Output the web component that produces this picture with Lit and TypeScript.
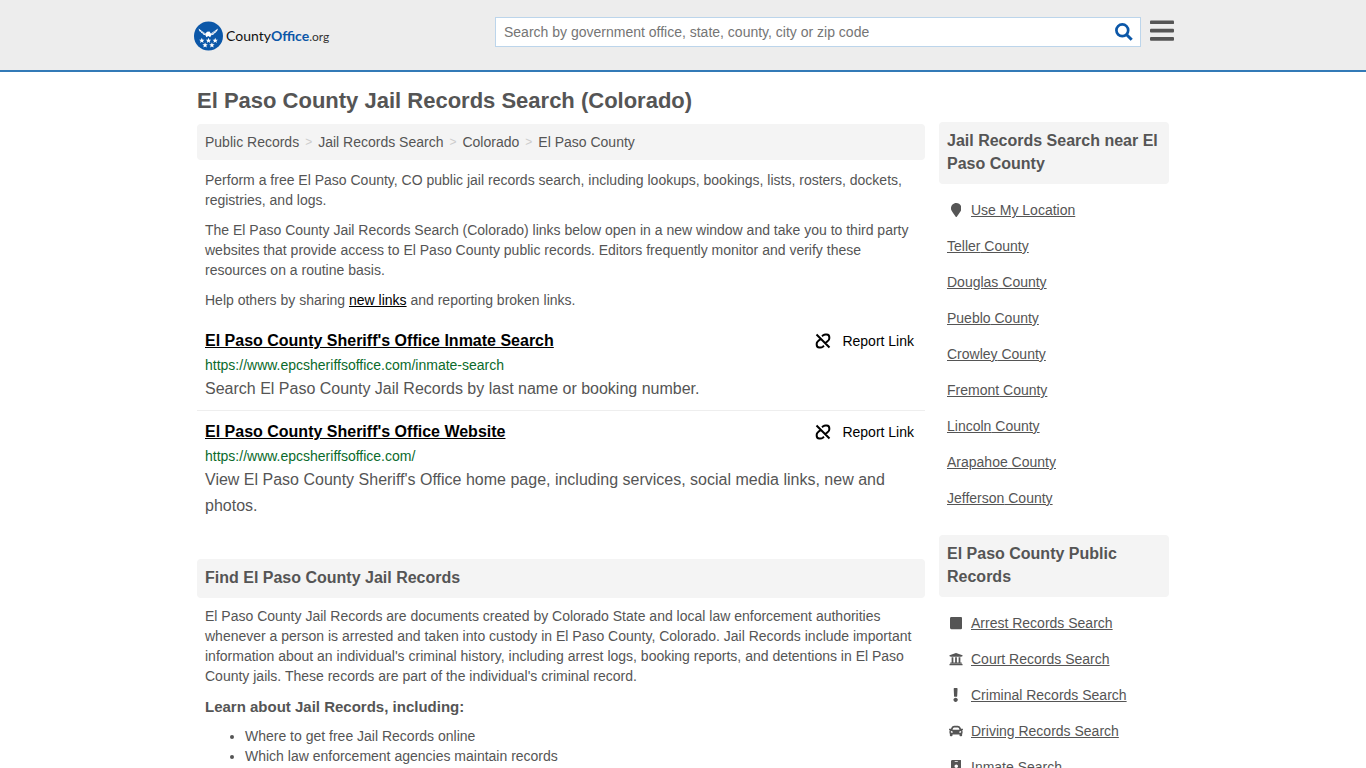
import { LitElement, html, css, svg } from "lit";
import { customElement } from "lit/decorators.js";

interface Icon {
  width: number;
  path: string;
}

const icons: Record<string, Icon> = {
  marker: {
    width: 384,
    path: "M172.268 501.67C26.97 291.031 0 269.413 0 192 0 85.961 85.961 0 192 0s192 85.961 192 192c0 77.413-26.97 99.031-172.268 309.67-9.535 13.774-29.93 13.773-39.464 0z",
  },
  square: {
    width: 448,
    path: "M400 32H48C21.5 32 0 53.5 0 80v352c0 26.500 21.500 48 48 48h352c26.500 0 48-21.500 48-48V80c0-26.500-21.500-48-48-48z",
  },
  court: {
    width: 512,
    path: "M496 128v16a8 8 0 0 1-8 8h-24v12c0 6.627-5.373 12-12 12H60c-6.627 0-12-5.373-12-12v-12H24a8 8 0 0 1-8-8v-16a8 8 0 0 1 4.941-7.392l232-88a7.996 7.996 0 0 1 6.118 0l232 88A8 8 0 0 1 496 128zm-24 304H40c-13.255 0-24 10.745-24 24v16a8 8 0 0 0 8 8h464a8 8 0 0 0 8-8v-16c0-13.255-10.745-24-24-24zM96 192v192H60c-6.627 0-12 5.373-12 12v20h416v-20c0-6.627-5.373-12-12-12h-36V192h-64v192h-64V192h-64v192h-64V192H96z",
  },
  exclamation: {
    width: 192,
    path: "M176 432c0 44.112-35.888 80-80 80s-80-35.888-80-80 35.888-80 80-80 80 35.888 80 80zM25.26 25.199l13.6 272C39.499 309.972 50.041 320 62.83 320h66.34c12.789 0 23.331-10.028 23.97-22.801l13.6-272C167.425 11.49 156.496 0 142.77 0H49.23C35.504 0 24.575 11.49 25.26 25.199z",
  },
  car: {
    width: 512,
    path: "M499.99 176h-59.87l-16.64-41.6C406.38 91.63 365.57 64 319.5 64h-127c-46.06 0-86.88 27.63-103.99 70.4L71.87 176H12.01C4.2 176-1.53 183.34.37 190.91l6 24C7.7 220.25 12.5 224 18.01 224h20.07C24.65 235.73 16 252.78 16 272v48c0 16.12 6.16 30.67 16 41.93V416c0 17.67 14.33 32 32 32h32c17.67 0 32-14.33 32-32v-32h256v32c0 17.67 14.33 32 32 32h32c17.67 0 32-14.33 32-32v-54.07c9.84-11.25 16-25.8 16-41.93v-48c0-19.22-8.65-36.27-22.07-48H494c5.51 0 10.31-3.75 11.64-9.09l6-24c1.89-7.57-3.84-14.91-11.65-14.91zm-352.06-17.83c7.29-18.22 24.94-30.17 44.57-30.17h127c19.63 0 37.28 11.95 44.57 30.17L384 208H128l19.93-49.83zM96 319.8c-19.2 0-32-12.76-32-31.9S76.8 256 96 256s48 28.71 48 47.85-28.8 15.95-48 15.95zm320 0c-19.2 0-48 3.19-48-15.95S396.800 256 416 256s32 12.76 32 31.9-12.8 31.9-32 31.9z",
  },
  badge: {
    width: 384,
    path: "M336 0H48C21.500 0 0 21.500 0 48v416c0 26.500 21.500 48 48 48h288c26.500 0 48-21.500 48-48V48c0-26.500-21.500-48-48-48zM144 32h96c8.800 0 16 7.200 16 16s-7.200 16-16 16h-96c-8.800 0-16-7.200-16-16s7.200-16 16-16zm48 128c35.300 0 64 28.700 64 64s-28.700 64-64 64-64-28.700-64-64 28.700-64 64-64z",
  },
};

const glyph = (name: string) => {
  const icon = icons[name];
  return html`<span class="glyph"><svg height="14" viewBox="0 0 ${icon.width} 512" fill="currentColor" aria-hidden="true">${svg`<path d=${icon.path}></path>`}</svg></span>`;
};

const nearby = ["Teller", "Douglas", "Pueblo", "Crowley", "Fremont", "Lincoln", "Arapahoe", "Jefferson"];

const publicRecords = [
  { icon: "square", label: "Arrest Records Search" },
  { icon: "court", label: "Court Records Search" },
  { icon: "exclamation", label: "Criminal Records Search" },
  { icon: "car", label: "Driving Records Search" },
  { icon: "badge", label: "Inmate Search" },
];

const results = [
  {
    title: "El Paso County Sheriff's Office Inmate Search",
    url: "https://www.epcsheriffsoffice.com/inmate-search",
    text: "Search El Paso County Jail Records by last name or booking number.",
  },
  {
    title: "El Paso County Sheriff's Office Website",
    url: "https://www.epcsheriffsoffice.com/",
    text: "View El Paso County Sheriff's Office home page, including services, social media links, new and photos.",
  },
];

const star = "M0-2.800L.8-.9 2.700-.9 1.200.400 1.700 2.300 0 1.200-1.700 2.300-1.200.400-2.700-.9-.8-.9Z";

@customElement("site-header")
export class SiteHeader extends LitElement {
  static styles = css`
    :host {
      display: block;
      background: #ededed;
      border-bottom: 2px solid #337ab7;
    }
    .bar {
      display: flex;
      align-items: flex-start;
      max-width: 982px;
      height: 70px;
      margin: 0 auto;
      padding-left: 2px;
      box-sizing: border-box;
    }
    .logo {
      display: flex;
      align-items: center;
      gap: 3px;
      width: 301px;
      margin-top: 20px;
      color: #111;
      font: 14px/28px Lato, sans-serif;
      text-decoration: none;
    }
    .name {
      padding-top: 2px;
    }
    .logo strong {
      color: #0b57a8;
      font-weight: 700;
    }
    .org {
      color: #333;
      font-size: 12px;
    }
    .search {
      display: flex;
      flex: 1;
      height: 30px;
      margin-top: 17px;
      box-sizing: border-box;
      background: #fff;
      border: 1px solid #bcd5eb;
    }
    .field {
      flex: 1;
      min-width: 0;
      border: 0;
      padding: 0 8px;
      background: transparent;
      color: #555;
      font: 14px/20px "Liberation Sans", Arial, sans-serif;
      outline: none;
    }
    .field::placeholder {
      color: #757575;
      opacity: 1;
    }
    button {
      display: flex;
      align-items: center;
      justify-content: center;
      padding: 0;
      border: 0;
      background: none;
      cursor: pointer;
    }
    .go {
      width: 32px;
      color: #0b57a8;
    }
    .menu {
      width: 24px;
      height: 30px;
      margin: 16px 0 0 9px;
      color: #555;
    }
  `;

  render() {
    return html`
      <header class="bar">
        <a class="logo" href="#">
          <svg width="29" height="30" viewBox="0 0 29 30" aria-hidden="true">
            <circle cx="14.500" cy="15" r="14.500" fill="#0b57a8"></circle>
            <g fill="#fff">
              <path d="M4.500 7.500L11.500 12.500 13 10.800 15.500 10.500 16.800 12.600 24 7.500 23 10.200 21.500 11 21.800 11.800 19.500 12.800 19.800 13.600 17.200 14.200 16.200 16.300 14.300 15 12.400 16.300 11.500 14.200 9 13.600 9.200 12.800 7 11.800 7.200 11 5.500 10.200Z"></path>
              <path d="M7 9.800L11.600 13.300M21.800 9.800L17 13.300" stroke="#0b57a8" stroke-width=".4"></path>
              <path d=${star} transform="translate(7.800 19.600)"></path>
              <path d=${star} transform="translate(14.500 19.600)"></path>
              <path d=${star} transform="translate(21.200 19.600)"></path>
              <path d=${star} transform="translate(11.100 24.200)"></path>
              <path d=${star} transform="translate(17.900 24.200)"></path>
            </g>
          </svg>
          <span class="name">County<strong>Office</strong><span class="org">.org</span></span>
        </a>
        <form class="search" role="search">
          <input class="field" type="text" aria-label="Search" placeholder="Search by government office, state, county, city or zip code" />
          <button class="go" type="button" aria-label="Search">
            <svg width="18" height="18" viewBox="0 0 18 18" fill="none" stroke="currentColor" aria-hidden="true">
              <circle cx="7.300" cy="7.300" r="5.900" stroke-width="2.700"></circle>
              <path d="M11.700 11.700L16.700 16.700" stroke-width="3"></path>
            </svg>
          </button>
        </form>
        <button class="menu" type="button" aria-label="Menu">
          <svg width="25" height="22" viewBox="0 0 25 22" fill="currentColor" aria-hidden="true">
            <rect y="0" width="25" height="3.800" rx="1"></rect>
            <rect y="8.700" width="25" height="3.800" rx="1"></rect>
            <rect y="17.300" width="25" height="3.800" rx="1"></rect>
          </svg>
        </button>
      </header>
    `;
  }
}

@customElement("app-root")
export class AppRoot extends LitElement {
  static styles = css`
    :host {
      display: block;
      min-height: 100vh;
      background: #fff;
      color: #555;
      font: 14px/20px "Liberation Sans", Arial, sans-serif;
    }
    .page {
      max-width: 972px;
      margin: 0 auto;
    }
    h1 {
      margin: 0;
      padding: 17px 0 9px;
      font-size: 22px;
      line-height: 24px;
    }
    .columns {
      display: grid;
      grid-template-columns: minmax(0, 1fr) 230px;
      gap: 14px;
      align-items: start;
    }
    .crumbs,
    .heading {
      background: #f4f4f4;
      border-radius: 4px;
    }
    .crumbs {
      display: flex;
      gap: 6px;
      margin-top: 2px;
      padding: 8px;
    }
    .crumbs a {
      color: inherit;
      text-decoration: none;
    }
    .sep {
      color: #ccc;
      font-size: 12px;
    }
    .heading {
      margin: 0;
      padding: 7px 8px 9px;
      font-size: 16px;
      line-height: 23px;
    }
    .copy {
      padding: 10px 8px;
    }
    p {
      margin: 0 0 10px;
    }
    .copy p:last-child {
      margin: 0;
    }
    a {
      color: inherit;
    }
    .share {
      color: #000;
    }
    .result {
      padding: 8px;
      border-bottom: 1px solid #eee;
    }
    .result:last-child {
      border: 0;
    }
    .row {
      display: flex;
      justify-content: space-between;
      color: #000;
      line-height: 26px;
    }
    .title {
      font-size: 16px;
      font-weight: 700;
    }
    .report {
      display: flex;
      align-items: center;
      gap: 11px;
      padding: 0 3px;
      text-decoration: none;
    }
    .url {
      margin: 1px 0;
      color: #0a6a2b;
    }
    .text {
      font-size: 16px;
      line-height: 26px;
    }
    .about {
      margin-top: 32px;
    }
    .about .copy {
      padding: 8px;
    }
    h3 {
      margin: 11px 0 9px;
      font-size: 15px;
      line-height: 20px;
    }
    .copy ul {
      margin: 0;
      padding-left: 40px;
    }
    .links {
      margin: 0 0 19px;
      padding: 8px 8px 0;
      list-style: none;
    }
    .links li {
      display: flex;
      align-items: center;
      height: 36px;
      gap: 6px;
    }
    .glyph {
      display: flex;
      justify-content: center;
      width: 18px;
    }
  `;

  render() {
    return html`
      <site-header></site-header>
      <div class="page">
        <h1>El Paso County Jail Records Search (Colorado)</h1>
        <div class="columns">
          <main>
            <nav class="crumbs" aria-label="Breadcrumb">
              <a href="#">Public Records</a><span class="sep">&gt;</span>
              <a href="#">Jail Records Search</a><span class="sep">&gt;</span>
              <a href="#">Colorado</a><span class="sep">&gt;</span>
              <a href="#">El Paso County</a>
            </nav>
            <div class="copy">
              <p>Perform a free El Paso County, CO public jail records search, including lookups, bookings, lists, rosters, dockets, registries, and logs.</p>
              <p>The El Paso County Jail Records Search (Colorado) links below open in a new window and take you to third party websites that provide access to El Paso County public records. Editors frequently monitor and verify these resources on a routine basis.</p>
              <p>Help others by sharing <a class="share" href="#">new links</a> and reporting broken links.</p>
            </div>
            <section>
              ${results.map(
                (r) => html`
                  <article class="result">
                    <div class="row">
                      <a class="title" href="#">${r.title}</a>
                      <a class="report" href="#">
                        <svg width="16" height="16" viewBox="0 0 16 16" fill="none" stroke="currentColor" stroke-width="2" aria-hidden="true">
                          <path d="M1.500 1.500L14.500 14.500M7 3.200L8.200 2.200Q9.200 1.500 10.500 1.500H11.700Q14.300 1.700 14.300 4.300V5.300Q14.300 6.500 13.400 7.400L10.600 10M9 12.800L7.800 13.800Q6.800 14.500 5.500 14.500H4.300Q1.700 14.300 1.700 11.700V10.700Q1.700 9.500 2.600 8.600L5.400 6"></path>
                        </svg>
                        Report Link
                      </a>
                    </div>
                    <div class="url">${r.url}</div>
                    <div class="text">${r.text}</div>
                  </article>
                `
              )}
            </section>
            <section class="about">
              <h2 class="heading">Find El Paso County Jail Records</h2>
              <div class="copy">
                <p>El Paso County Jail Records are documents created by Colorado State and local law enforcement authorities whenever a person is arrested and taken into custody in El Paso County, Colorado. Jail Records include important information about an individual's criminal history, including arrest logs, booking reports, and detentions in El Paso County jails. These records are part of the individual's criminal record.</p>
                <h3>Learn about Jail Records, including:</h3>
                <ul>
                  <li>Where to get free Jail Records online</li>
                  <li>Which law enforcement agencies maintain records</li>
                </ul>
              </div>
            </section>
          </main>
          <aside>
            <h2 class="heading">Jail Records Search near El Paso County</h2>
            <ul class="links">
              <li>${glyph("marker")}<a href="#">Use My Location</a></li>
              ${nearby.map((name) => html`<li><a href="#">${name} County</a></li>`)}
            </ul>
            <h2 class="heading">El Paso County Public Records</h2>
            <ul class="links">
              ${publicRecords.map((r) => html`<li>${glyph(r.icon)}<a href="#">${r.label}</a></li>`)}
            </ul>
          </aside>
        </div>
      </div>
    `;
  }
}
